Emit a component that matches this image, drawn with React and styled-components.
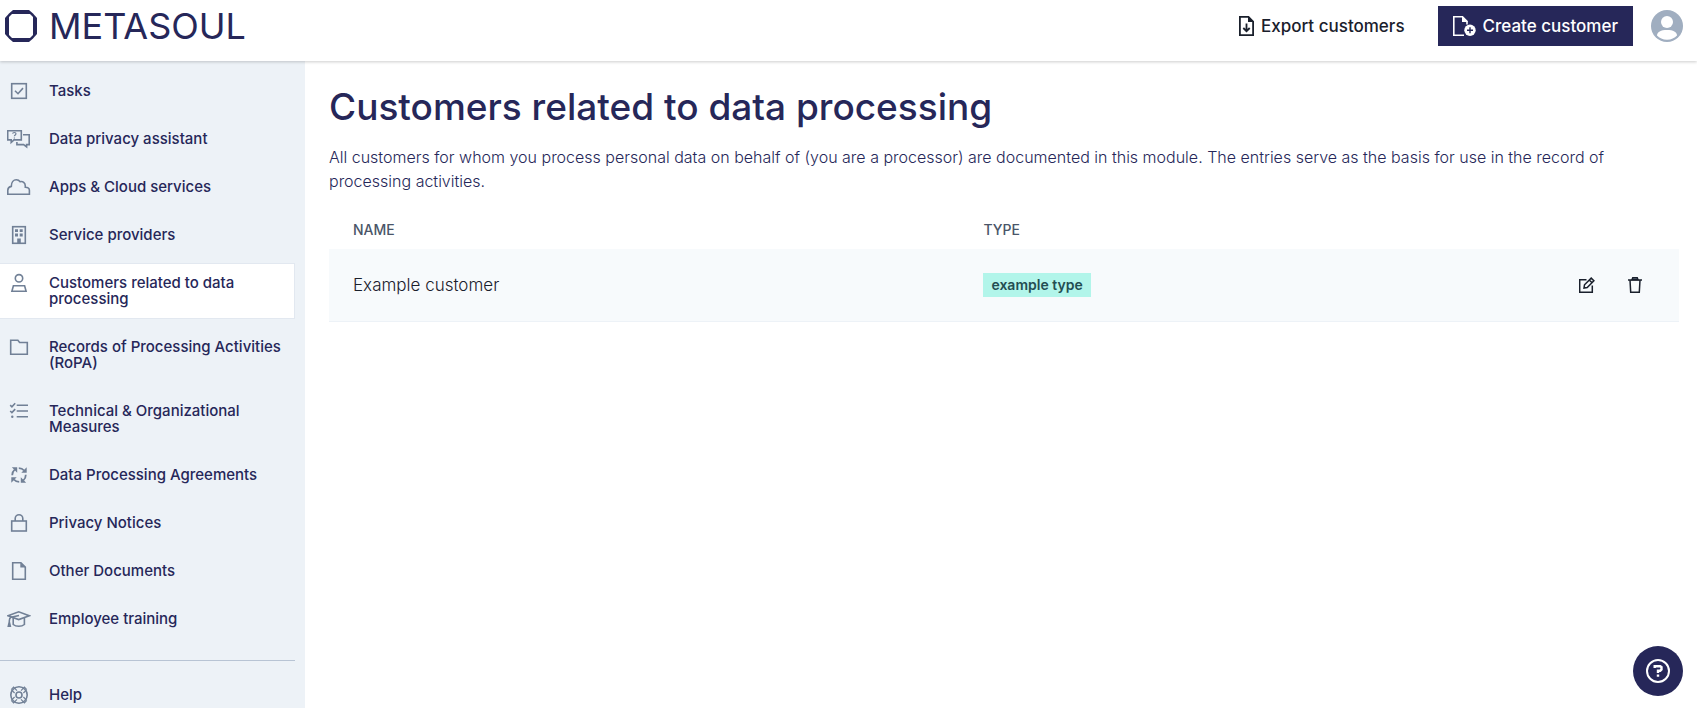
import React from 'react';
import styled, { createGlobalStyle } from 'styled-components';

const GlobalStyle = createGlobalStyle`
  * {
    box-sizing: border-box;
  }
  body {
    margin: 0;
    background-color: #ffffff;
    color: #1a202c;
    font-family: Inter, "Liberation Sans", sans-serif;
    font-size: 16px;
  }
`;

const Icon = ({ size = 24, children }) => (
  <svg width={size} height={size} viewBox="0 0 24 24" fill="none" stroke="currentColor" strokeWidth="1.6" aria-hidden="true">
    {children}
  </svg>
);

const navItems = [
  {
    label: 'Tasks',
    icon: (
      <>
        <rect x="4.7" y="4.7" width="14.6" height="14.6" />
        <path d="M8 11.7l3 3 5-5.6" />
      </>
    ),
  },
  {
    label: 'Data privacy assistant',
    icon: (
      <>
        <path d="M.7 3.7h13.6v9.2H7l-2.8 2.6v-2.6H.7z" />
        <path d="M16 7.7h6.2v9.9h-2.6v2.3l-3-2.3H9.9V15" />
        <path d="M5.6 6.6c.2-1.5 3.4-1.5 3.4.2 0 1.2-1.6 1.1-1.6 2.5M7.4 10.4v1.2" strokeWidth="1.2" />
      </>
    ),
  },
  {
    label: 'Apps & Cloud services',
    icon: <path d="M.8 19.2v-4.1c.1-2 1.4-3.3 3.5-3.7C4.3 7.2 6.6 4.7 9.3 4.7c1.7 0 3 .8 3.7 2 2.8-.7 5.3 1 5.3 4.4v1.1c2.5 0 4 1 4.1 3v4z" />,
  },
  {
    label: 'Service providers',
    icon: (
      <>
        <rect x="5.7" y="3.7" width="12.6" height="16.6" />
        <path d="M8 6.2h3V9H8zM12.7 6.2h3V9h-3zM8 10.6h3v2.8H8zM12.7 10.6h3v2.8h-3zM10.2 15.5h3.6v5h-3.6z" fill="currentColor" stroke="none" />
      </>
    ),
  },
  {
    label: 'Customers related to data processing',
    active: true,
    icon: (
      <>
        <circle cx="12" cy="7.3" r="3.7" />
        <path d="M6.4 14.7h11.2l1.5 5.6H4.9z" />
      </>
    ),
  },
  {
    label: 'Records of Processing Activities (RoPA)',
    icon: <path d="M3.7 19.3V5.3h7.2l1.7 2.2h7.7v11.8z" />,
  },
  {
    label: 'Technical & Organizational Measures',
    icon: (
      <>
        <path d="M9.7 6.3H21M9.7 12H21M9.7 17.8H21" />
        <path d="M3.2 6.2l1.7 1.6 3.3-3.5M3.2 12l1.7 1.6 3.3-3.5" />
        <circle cx="5.3" cy="17.8" r="1.2" fill="currentColor" stroke="none" />
      </>
    ),
  },
  {
    label: 'Data Processing Agreements',
    icon: (
      <>
        <path d="M5.2 12.2c0-2.4.9-4.3 2.5-5.6M11.8 5.2c2.2 0 4 .8 5.3 2.3M18.8 11.8c0 2.4-.9 4.3-2.5 5.6M12.2 18.8c-2.2 0-4-.8-5.3-2.3" strokeWidth="1.8" />
        <path d="M4.8 4.3h5.4v5.4zM19.7 4.3v5.4h-5.4zM19.2 19.7h-5.4v-5.4zM4.3 19.7v-5.4h5.4z" fill="currentColor" stroke="none" />
      </>
    ),
  },
  {
    label: 'Privacy Notices',
    icon: (
      <>
        <rect x="4.7" y="10" width="14.6" height="10" />
        <path d="M8.2 10V7.5a3.8 3.8 0 0 1 7.6 0V10" />
      </>
    ),
  },
  {
    label: 'Other Documents',
    icon: (
      <>
        <path d="M5.7 3.7h8.2l4.4 4.5v12.1H5.7z" />
        <path d="M13.3 3.7v4.9h5z" fill="currentColor" stroke="none" />
      </>
    ),
  },
  {
    label: 'Employee training',
    icon: (
      <>
        <path d="M1 8.7l10.7-3.9 10.5 3.9-10.5 3.9z" />
        <path d="M6.2 11v6.5c2.8 2.4 8.3 2.4 11.2 0V11" />
        <path d="M12 8.5L4 10.3c-1.3.6-1.7 1.7-1.7 3.7v1.5M2.3 15l-1 4.3h2z" />
      </>
    ),
  },
];

const HelpItemIcon = (
  <>
    <circle cx="12" cy="12" r="8.2" />
    <circle cx="12" cy="12" r="3" />
    <path d="M4.2 6.6l2.4-2.4L10 7.6M19.8 6.6l-2.4-2.4L14 7.6M4.2 17.4l2.4 2.4 3.4-3.4M19.8 17.4l-2.4 2.4-3.4-3.4M4.2 6.6L7.6 10M19.8 6.6L16.4 10M4.2 17.4L7.6 14M19.8 17.4L16.4 14" strokeWidth="1.2" />
  </>
);

const customers = [{ id: 1, name: 'Example customer', type: 'example type' }];

const NavItem = ({ item }) => (
  <li>
    <NavLink href="#" $active={item.active} aria-current={item.active ? 'page' : undefined}>
      <Icon>{item.icon}</Icon>
      <NavLabel>{item.label}</NavLabel>
    </NavLink>
  </li>
);

const App = () => {
  return (
    <Page>
      <GlobalStyle />
      <Header>
        <Logo href="#">
          <svg width="32" height="32" viewBox="0 0 32 32" aria-hidden="true">
            <path d="M8 0h16l4 3.500 4 4.500v16l-4 4.500-4 3.500H8l-4-3.500L0 24V8l4-4.500z" fill="#262759" />
            <path d="M7 4h18l3 3v18l-3 3H7l-3-3V7z" fill="#ffffff" />
          </svg>
          METASOUL
        </Logo>
        <Actions>
          <ActionButton>
            <svg width="15" height="20" viewBox="0 0 15 20" fill="none" stroke="currentColor" strokeWidth="1.8" aria-hidden="true">
              <path d="M.9.9h8.600l4.600 4.600v13.600H.9z" />
              <path d="M9 0l6 6H9z" fill="currentColor" stroke="none" />
              <path d="M7.500 7.500v7M4.300 12l3.200 3.200 3.200-3.200" />
            </svg>
            Export customers
          </ActionButton>
          <ActionButton $primary>
            <svg width="23" height="20" viewBox="0 0 23 20" fill="none" stroke="currentColor" strokeWidth="1.6" aria-hidden="true">
              <path d="M11 19.200H.8V.8h8.700l4.500 4.600v3" />
              <path d="M9 0l6 6H9z" fill="currentColor" stroke="none" />
              <circle cx="17" cy="14.3" r="5.7" fill="currentColor" stroke="none" />
              <path d="M17 11.300v6M14 14.300h6" stroke="#262759" strokeWidth="1.4" />
            </svg>
            Create customer
          </ActionButton>
          <AvatarButton aria-label="Account">
            <svg width="32" height="32" viewBox="0 0 32 32" aria-hidden="true">
              <circle cx="16" cy="16" r="16" fill="#a0aec0" />
              <circle cx="16" cy="12" r="6" fill="#ffffff" />
              <path d="M6 25.500c0-3.500 3.800-5.500 10-5.500s10 2 10 5.500c-2.300 2.600-5.800 4.300-10 4.300S8.300 28.100 6 25.500z" fill="#ffffff" />
            </svg>
          </AvatarButton>
        </Actions>
      </Header>
      <Body>
        <Sidebar>
          <NavList>
            {navItems.map((item) => (
              <NavItem key={item.label} item={item} />
            ))}
          </NavList>
          <Divider />
          <NavList>
            <NavItem item={{ label: 'Help', icon: HelpItemIcon }} />
          </NavList>
        </Sidebar>
        <Main>
          <Title>Customers related to data processing</Title>
          <Description>
            All customers for whom you process personal data on behalf of (you are a processor) are documented in this
            module. The entries serve as the basis for use in the record of processing activities.
          </Description>
          <Table>
            <thead>
              <tr>
                <HeadCell $width="46.7%">Name</HeadCell>
                <HeadCell>Type</HeadCell>
                <HeadCell aria-label="Actions" />
              </tr>
            </thead>
            <tbody>
              {customers.map((customer) => (
                <Row key={customer.id}>
                  <Cell>{customer.name}</Cell>
                  <Cell>
                    <Badge>{customer.type}</Badge>
                  </Cell>
                  <Cell>
                    <RowActions>
                      <IconButton aria-label="Edit customer">
                        <svg width="16" height="16" viewBox="0 0 16 16" fill="none" stroke="currentColor" strokeWidth="1.5" aria-hidden="true">
                          <path d="M7.500 2.700H.7v12.600h12.600V8.500" />
                          <path d="M5 11l.5-3.200 6.700-6.700 2.700 2.700-6.700 6.700zM10.300 3l2.700 2.700" />
                        </svg>
                      </IconButton>
                      <IconButton aria-label="Delete customer">
                        <svg width="16" height="16" viewBox="0 0 16 16" fill="none" stroke="currentColor" strokeWidth="1.5" aria-hidden="true">
                          <path d="M1 3h14M3 3l.7 12.300h8.600L13 3" />
                          <path d="M5 2.800L5.800.7h4.400L11 2.800z" fill="#718096" />
                        </svg>
                      </IconButton>
                    </RowActions>
                  </Cell>
                </Row>
              ))}
            </tbody>
          </Table>
        </Main>
      </Body>
      <HelpButton aria-label="Help">
        <svg width="24" height="24" viewBox="0 0 24 24" fill="none" stroke="currentColor" strokeWidth="2" aria-hidden="true">
          <circle cx="12" cy="12" r="11" />
          <path d="M8.700 9V7.200h5.500l1.300 1v2.200l-1.300 1.300H12V14" strokeWidth="2.4" />
          <path d="M10.800 15.500h2.400v2.300h-2.400z" fill="currentColor" stroke="none" />
        </svg>
      </HelpButton>
    </Page>
  );
};

export default App;

const Page = styled.div`
  display: flex;
  flex-direction: column;
  height: 100vh;
  overflow: hidden;
`;

const Header = styled.header`
  display: flex;
  justify-content: space-between;
  align-items: flex-start;
  height: 61px;
  flex-shrink: 0;
  padding: 6px 14px 0 5px;
  background-color: #ffffff;
  box-shadow: 0 1px 3px rgba(0, 0, 0, 0.2);
  z-index: 1;
`;

const Logo = styled.a`
  display: flex;
  align-items: center;
  gap: 12px;
  height: 40px;
  color: #262759;
  font-size: 36px;
  font-weight: 400;
  text-decoration: none;
`;

const Actions = styled.div`
  display: flex;
  align-items: center;
  gap: 18px;
`;

const ActionButton = styled.button`
  display: flex;
  align-items: center;
  gap: 7px;
  height: 40px;
  padding: 0 15px;
  border: none;
  background-color: ${({ $primary }) => ($primary ? '#262759' : 'transparent')};
  color: ${({ $primary }) => ($primary ? '#ffffff' : '#1a202c')};
  font-family: inherit;
  font-size: 17px;
  font-weight: 500;
  cursor: pointer;
`;

const AvatarButton = styled.button`
  display: flex;
  padding: 0;
  border: none;
  border-radius: 50%;
  background: none;
  cursor: pointer;
`;

const Body = styled.div`
  display: flex;
  flex: 1;
  min-height: 0;
`;

const Sidebar = styled.nav`
  width: 305px;
  flex-shrink: 0;
  padding: 10px 10px 0 0;
  background-color: #edf2f7;
  overflow: hidden;
`;

const NavList = styled.ul`
  display: flex;
  flex-direction: column;
  gap: 8px;
  margin: 0;
  padding: 0;
  list-style: none;
`;

const NavLink = styled.a`
  display: flex;
  align-items: flex-start;
  gap: 18px;
  padding: 8px 8px 8px 7px;
  background-color: ${({ $active }) => ($active ? '#ffffff' : 'transparent')};
  box-shadow: ${({ $active }) =>
    $active ? 'inset -1px 0 #e2e8f0, inset 0 1px #e2e8f0, inset 0 -1px #e2e8f0' : 'none'};
  color: #718096;
  text-decoration: none;

  svg {
    flex-shrink: 0;
  }
`;

const NavLabel = styled.span`
  padding: 4px 0;
  color: #262759;
  font-size: 15px;
  font-weight: 500;
  line-height: 16px;
`;

const Divider = styled.hr`
  height: 1px;
  margin: 21px 0 14px;
  border: none;
  background-color: #b8c4d4;
`;

const Main = styled.main`
  flex: 1;
  min-width: 0;
  padding: 22px 18px 24px 24px;
`;

const Title = styled.h1`
  margin: 0;
  color: #262759;
  font-size: 37px;
  font-weight: 550;
  line-height: 48px;
`;

const Description = styled.p`
  margin: 14px 0 0;
  color: #262759;
  font-size: 16px;
  font-weight: 300;
  line-height: 24px;
`;

const Table = styled.table`
  width: 100%;
  margin-top: 16px;
  border-collapse: collapse;
  table-layout: fixed;
`;

const HeadCell = styled.th`
  width: ${({ $width }) => $width || 'auto'};
  height: 40px;
  padding: 0 24px;
  color: #4a5568;
  font-size: 14px;
  font-weight: 500;
  text-align: left;
  text-transform: uppercase;
`;

const Row = styled.tr`
  border-bottom: 1px solid #edf2f7;
  background-color: #f7fafc;
`;

const Cell = styled.td`
  height: 72px;
  padding: 0 24px;
  font-size: 17px;
  font-weight: 300;
`;

const Badge = styled.span`
  display: inline-block;
  padding: 0 8px;
  background-color: #b2f5ea;
  color: #234e52;
  font-size: 14px;
  font-weight: 600;
  line-height: 24px;
  vertical-align: middle;
`;

const RowActions = styled.div`
  display: flex;
  justify-content: flex-end;
  gap: 8px;
`;

const IconButton = styled.button`
  display: flex;
  align-items: center;
  justify-content: center;
  width: 40px;
  height: 40px;
  padding: 0;
  border: none;
  background: none;
  color: #1a202c;
  cursor: pointer;
`;

const HelpButton = styled.button`
  position: fixed;
  right: 14px;
  bottom: 12px;
  display: flex;
  align-items: center;
  justify-content: center;
  width: 50px;
  height: 50px;
  border: none;
  border-radius: 50%;
  background-color: #262759;
  color: #ffffff;
  cursor: pointer;
`;
